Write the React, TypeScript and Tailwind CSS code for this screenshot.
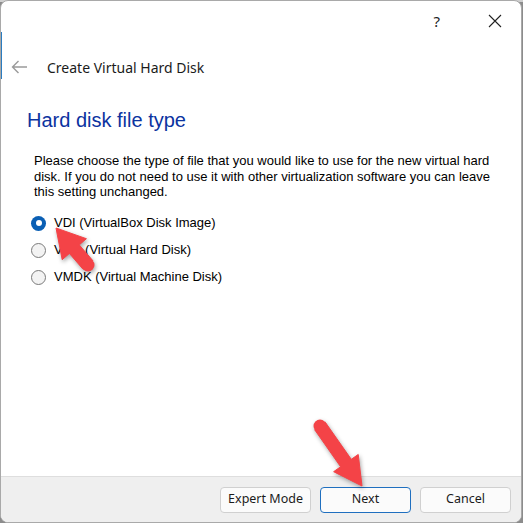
import React from "react";

type P = { x: number; y: number };

function Arrow({ tail, tip, headLen = 28, headW = 15 }: { tail: P; tip: P; headLen?: number; headW?: number }) {
  const dx = tip.x - tail.x;
  const dy = tip.y - tail.y;
  const len = Math.hypot(dx, dy);
  const ux = dx / len;
  const uy = dy / len;
  const nx = -uy;
  const ny = ux;
  const shaftW = 6.5;
  const bx = tip.x - ux * headLen;
  const by = tip.y - uy * headLen;
  const pts = [
    [tip.x, tip.y],
    [bx + nx * headW, by + ny * headW],
    [bx + nx * shaftW, by + ny * shaftW],
    [tail.x + nx * shaftW, tail.y + ny * shaftW],
    [tail.x - nx * shaftW, tail.y - ny * shaftW],
    [bx - nx * shaftW, by - ny * shaftW],
    [bx - nx * headW, by - ny * headW],
  ]
    .map((p) => p.join(","))
    .join(" ");
  return (
    <g>
      <polygon points={pts} fill="#f44347" strokeLinejoin="round" stroke="#f44347" strokeWidth="1" />
      <circle cx={tail.x} cy={tail.y} r={shaftW} fill="#f44347" />
    </g>
  );
}

function Radio({ checked }: { checked?: boolean }) {
  if (checked) {
    return (
      <span className="flex h-[15px] w-[15px] items-center justify-center rounded-full bg-[#0a5fb4]">
        <span className="h-[6px] w-[6px] rounded-full bg-white" />
      </span>
    );
  }
  return <span className="h-[15px] w-[15px] rounded-full border border-[#7a7a7a] bg-[#f3f3f3]" />;
}

export default function App() {
  const ui = { fontFamily: '"Noto Sans", "Open Sans", sans-serif' };
  const tah = { fontFamily: '"Liberation Sans", Arial, sans-serif' };
  return (
    <div className="relative h-[523px] w-[523px] overflow-hidden bg-[#8c8c8c]">
      <div className="absolute left-0 top-0 h-[2px] w-full bg-[#cfcfcf]" />
      <div className="relative flex h-[523px] w-[522px] flex-col overflow-hidden rounded-t-[8px] rounded-b-[8px] border border-[#a9a9a9] bg-white">
        <div className="absolute left-[-1px] top-[31px] h-[47px] w-[2px] bg-[#2b7cc0]" />
        {/* title bar */}
        <div className="flex h-[40px] items-center justify-end pr-[19px]" style={ui}>
          <span className="mr-[48px] text-[15px] text-[#222]">?</span>
          <svg width="14" height="14" viewBox="0 0 14 14">
            <path d="M1 1 L13 13 M13 1 L1 13" stroke="#222" strokeWidth="1.1" />
          </svg>
        </div>
        {/* header */}
        <div className="mt-[13px] flex h-[26px] items-center" style={ui}>
          <svg className="ml-[10px]" width="17" height="14" viewBox="0 0 17 14">
            <path d="M16 7 H1.5 M7.5 1 L1.5 7 L7.5 13" stroke="#9a9a9a" strokeWidth="1.4" fill="none" />
          </svg>
          <span className="ml-[19px] text-[14px] text-[#1b1b1b]">Create Virtual Hard Disk</span>
        </div>
        {/* content */}
        <div className="flex-1 pl-[26px]" style={tah}>
          <div className="mt-[28px] text-[20px] leading-[24px] text-[#0b33a0]">Hard disk file type</div>
          <p className="mt-[21px] w-[470px] pl-[7px] text-[13px] leading-[15.5px] text-black">
            Please choose the type of file that you would like to use for the new virtual hard disk. If you do not need to use it with other virtualization software you can leave this setting unchanged.
          </p>
          <div className="mt-[16px] flex flex-col gap-[12px] pl-[4px]">
            {[
              ["VDI (VirtualBox Disk Image)", true],
              ["VHD (Virtual Hard Disk)", false],
              ["VMDK (Virtual Machine Disk)", false],
            ].map(([label, c]) => (
              <div key={label as string} className="flex h-[15px] items-center gap-[8px] text-[13px] text-black">
                <Radio checked={c as boolean} />
                <span>{label as string}</span>
              </div>
            ))}
          </div>
        </div>
        {/* footer */}
        <div className="flex h-[46px] items-center justify-end gap-[9px] border-t border-[#dedede] bg-[#efefef] pr-[10px]" style={ui}>
          <button className="h-[26px] w-[91px] rounded-[4px] border border-[#d0d0d0] bg-[#fbfbfb] text-[12.5px] text-[#1b1b1b]">Expert Mode</button>
          <button className="h-[26px] w-[91px] rounded-[4px] border border-[#1f6fbf] bg-[#fbfbfb] text-[12.5px] text-[#1b1b1b]">Next</button>
          <button className="h-[26px] w-[91px] rounded-[4px] border border-[#d0d0d0] bg-[#fbfbfb] text-[12.5px] text-[#1b1b1b]">Cancel</button>
        </div>
      </div>
      <svg className="pointer-events-none absolute left-0 top-0" width="523" height="523" style={{ filter: "drop-shadow(1px 2px 2px rgba(0,0,0,0.35))" }}>
        <Arrow tail={{ x: 88, y: 265 }} tip={{ x: 56, y: 228 }} headLen={28} headW={16} />
        <Arrow tail={{ x: 320, y: 426 }} tip={{ x: 362, y: 486 }} />
      </svg>
    </div>
  );
}
